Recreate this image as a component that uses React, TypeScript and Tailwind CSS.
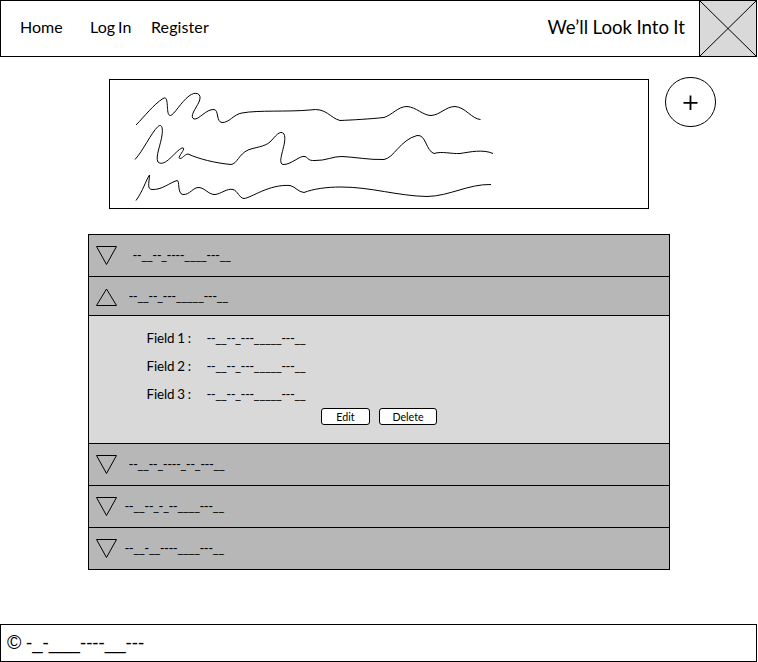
import React from "react";

const line = { fill: "none", stroke: "#000", strokeWidth: 1 } as const;

function Triangle({ up = false }: { up?: boolean }) {
  return (
    <svg className="ml-[7px] h-5 w-[22px] shrink-0" viewBox="0 0 22 20" {...line}>
      <path d={up ? "M10.500 3 L20.500 19.500 H0.500 Z" : "M0.500 0.500 H20.500 L10.500 18.500 Z"} />
    </svg>
  );
}

function Row({ text, up, className }: { text: string; up?: boolean; className: string }) {
  return (
    <div className={`flex items-center border-b border-black bg-[#b7b7b7] ${className}`}>
      <Triangle up={up} />
      <span className="whitespace-nowrap pt-px tracking-[-0.57px]">{text}</span>
    </div>
  );
}

function Scribbles() {
  return (
    <svg className="h-full w-full" viewBox="110 80 538 128" {...line}>
      <path d="M136 125 C145 116 153 105 163 98.500 C170 94 165 116 170.500 115.500 C174 115 181 102 189 96 C195 91 203 93 199 102 C196 108 189 117 194 119 C199 120 206 109 214 109.500 C219 110 216 122 222 122.500 C229 123 234 114 242 113 C258 110 287 112 310 110 C326 107 330 118 340 120.500 C352 120 370 119 384 117.500 C392 115 398 106.500 407 106.500 C416 107 423 115.500 431 115.500 C440 115 446 106.500 455 106.500 C465 107 472 119 480.500 119.500" />
      <path d="M135 159.500 C143 151 151 133 158 126.500 C162 123 163 129 162 135 C161 144 155 157 158 162 C165 168 175 151 182 148 C188 147 176 158 180 158.500 C182 159 185 154 188 154 C199 159 215 163 231 164.500 C237 164 239 154 248 150 C256 147 264 147 270 142 C275 137 280 129 284 134 C288 142 276 163 283 164.500 C291 165 300 155 305 156.500 C308 157 307 161 315 160.500 C325 161 334 156 342 156.500 C355 157 369 160 384 159.500 C394 158 400 140 417 135.500 C426 134 426 151 434 153.500 C442 151 451 154 460 153.500 C470 152 483 149 493 153.500" />
      <path d="M136 200.500 C143 191 146 180 149.500 175 C149 184 147 189 152 189.500 C162 190 169 183 177 180.500 C180 180 177 194 183 194.500 C190 195 193 187 199 187.500 C205 188 209 195 215 194.500 C221 194 227 188 233 189.500 C238 191 239 198 244 198.500 C251 198 269 184 290 185.500 C296 187 298 192 304 192.500 C313 189 326 187 341 187 C371 187 398 196 427 196.500 C450 196 468 184 491 184.500" />
    </svg>
  );
}

function Field({ n }: { n: number }) {
  return (
    <div className="flex h-7 items-center">
      <span className="w-[60px] whitespace-pre tracking-[-0.1px] [word-spacing:-0.4px]">{`Field ${n} :`}</span>
      <span className="tracking-[-0.59px]">--__--_---_____---__</span>
    </div>
  );
}

export default function App() {
  return (
    <div className="flex h-[662px] w-[757px] flex-col bg-white font-['Lato',sans-serif] text-[13.33px] text-black">
      <header className="flex h-[57px] shrink-0 border border-black">
        <nav className="flex items-center pb-[3px] pl-[19px] text-base">
          <a className="w-[70px]">Home</a>
          <a className="w-[61px] [word-spacing:-1px]">Log In</a>
          <a className="tracking-[0.1px]">Register</a>
        </nav>
        <h1 className="ml-auto flex items-center pb-[3px] pr-[14px] text-[18.67px] [word-spacing:-0.4px]">We’ll Look Into It</h1>
        <div className="w-[57px] border-l border-black bg-[#d9d9d9]">
          <svg className="h-full w-full" viewBox="0 0 56 55" {...line}>
            <path d="M0 0 L56 55 M56 0 L0 55" />
          </svg>
        </div>
      </header>

      <section className="ml-[109px] mt-5 flex h-[132px] shrink-0 items-start gap-4">
        <div className="mt-[2px] h-[130px] w-[540px] border border-black">
          <Scribbles />
        </div>
        <button className="flex h-[50px] w-[51px] items-center justify-center rounded-full border border-black">
          <svg className="mt-px h-4 w-4" viewBox="0 0 16 16" fill="none" stroke="#000" strokeWidth="1.8">
            <path d="M7.500 0.500 V15 M0.500 7.800 H14.500" />
          </svg>
        </button>
      </section>

      <main className="ml-[88px] mt-[25px] w-[582px] shrink-0 border border-b-0 border-black">
        <Row className="h-[42px] gap-[14.400px]" text="--__--_----____---__" />
        <Row className="h-[39px] gap-[10.400px]" text="--__--_---_____---__" up />
        <div className="h-[128px] border-b border-black bg-[#d9d9d9] pt-[9px]">
          <div className="pl-[57.500px]">
            <Field n={1} />
            <Field n={2} />
            <Field n={3} />
          </div>
          <div className="-mt-px ml-[232px] flex gap-[9px] text-[10.67px]">
            <button className="flex h-[17px] w-[49px] items-center justify-center rounded-[3px] border border-black bg-white">Edit</button>
            <button className="flex h-[17px] w-[58px] items-center justify-center rounded-[3px] border border-black bg-white">Delete</button>
          </div>
        </div>
        <Row className="h-[42px] gap-[10.600px]" text="--__--_----_--_---__" />
        <Row className="h-[42px] gap-[6.400px]" text="--__--_-_--____---__" />
        <Row className="h-[42px] gap-[6.400px]" text="--__-__----____---__" />
      </main>

      <footer className="mt-auto flex h-[38px] shrink-0 items-center border border-black pl-[6px] font-['Liberation_Sans',sans-serif] text-[18.67px]">
        <span className="w-[19px] pb-px text-[19.5px]">©</span>
        <span>-_-___----__---</span>
      </footer>
    </div>
  );
}
